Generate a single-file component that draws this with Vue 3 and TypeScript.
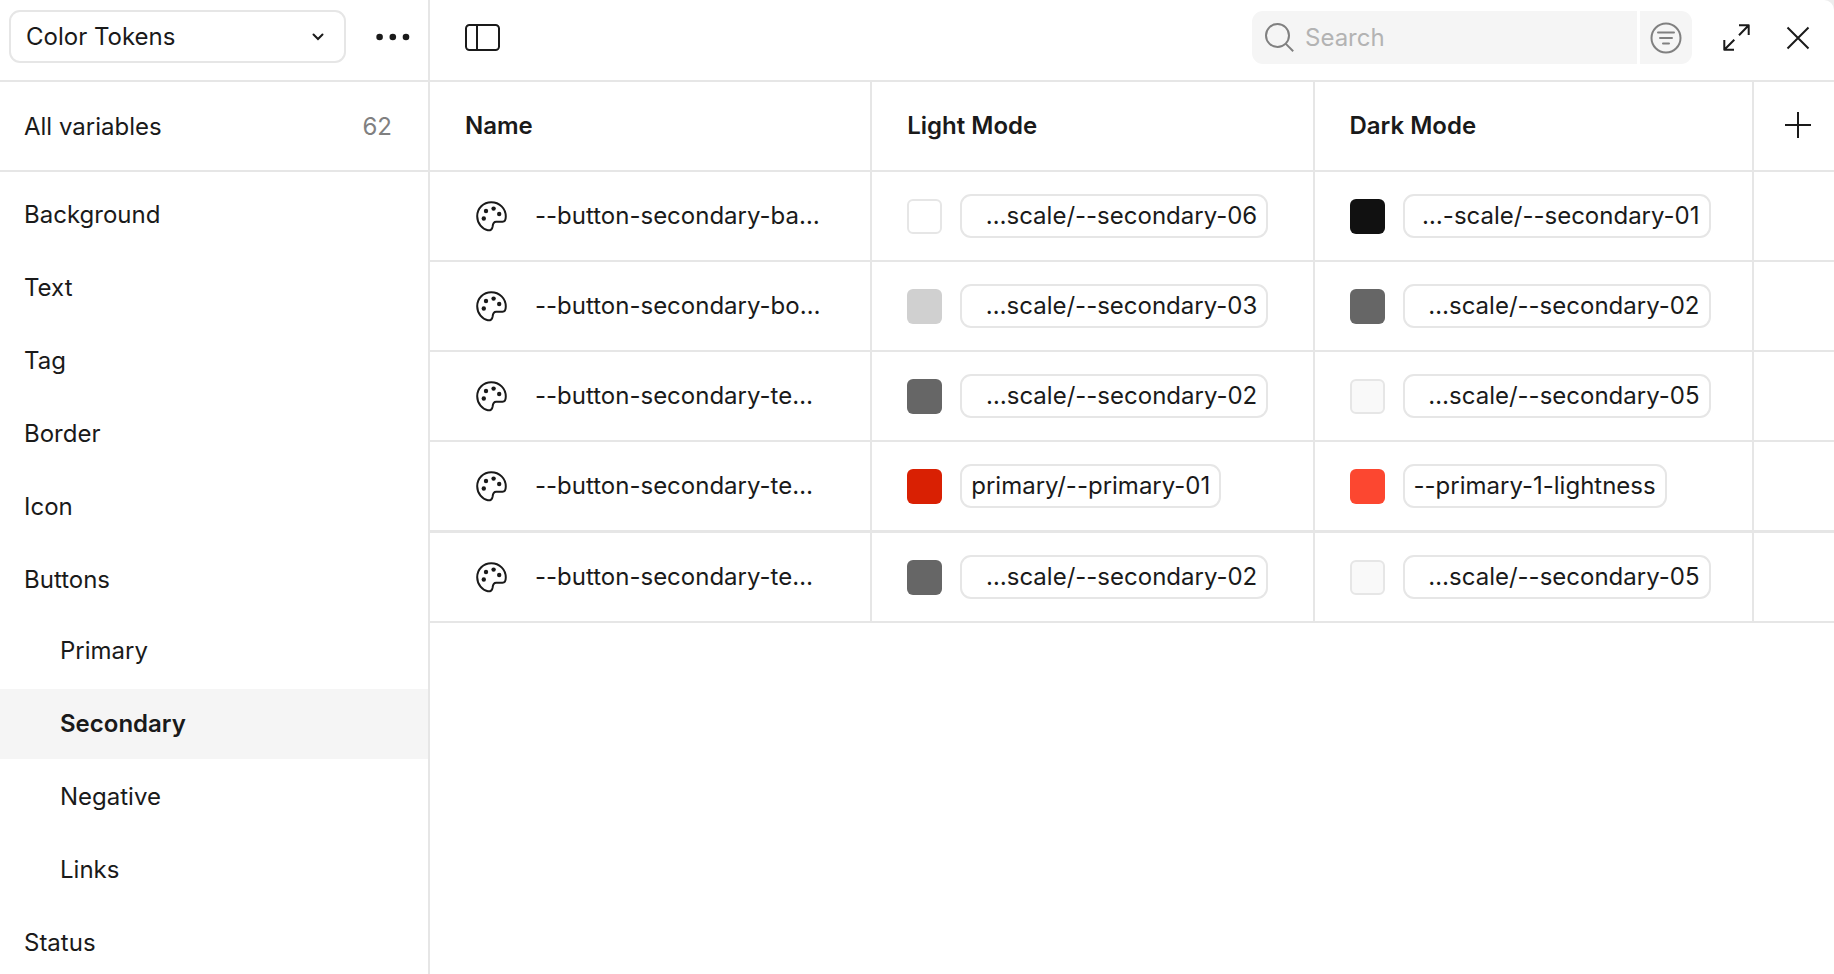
<script setup lang="ts">
import { ref } from 'vue'

interface TokenValue {
  color: string
  label: string
  outlined?: boolean
  clipped?: boolean
}

interface Token {
  name: string
  light: TokenValue
  dark: TokenValue
}

interface Group {
  name: string
  children?: string[]
}

const collection = ref('Color Tokens')
const query = ref('')
const selected = ref('Secondary')

const groups: Group[] = [
  { name: 'Background' },
  { name: 'Text' },
  { name: 'Tag' },
  { name: 'Border' },
  { name: 'Icon' },
  { name: 'Buttons', children: ['Primary', 'Secondary', 'Negative', 'Links'] },
  { name: 'Status' },
]

const black: TokenValue = { color: '#111111', label: '…-scale/--secondary-01', clipped: true }
const grey: TokenValue = { color: '#666666', label: '…scale/--secondary-02', clipped: true }
const silver: TokenValue = { color: '#d0d0d0', label: '…scale/--secondary-03', clipped: true }
const mist: TokenValue = { color: '#f9f9f9', label: '…scale/--secondary-05', clipped: true, outlined: true }
const white: TokenValue = { color: '#ffffff', label: '…scale/--secondary-06', clipped: true, outlined: true }

const tokens: Token[] = [
  { name: '--button-secondary-ba…', light: white, dark: black },
  { name: '--button-secondary-bo…', light: silver, dark: grey },
  { name: '--button-secondary-te…', light: grey, dark: mist },
  {
    name: '--button-secondary-te…',
    light: { color: '#d92003', label: 'primary/--primary-01' },
    dark: { color: '#fc4730', label: '--primary-1-lightness' },
  },
  { name: '--button-secondary-te…', light: grey, dark: mist },
]
</script>

<template>
  <div class="panel">
    <aside class="sidebar">
      <div class="bar sidebar-bar">
        <div class="collection">
          <select v-model="collection" aria-label="Collection">
            <option>Color Tokens</option>
          </select>
          <svg class="chevron" width="12" height="8" viewBox="0 0 12 8" aria-hidden="true">
            <path d="M1.500 1.500 6 6l4.500-4.500" />
          </svg>
        </div>
        <button class="icon-button" type="button" aria-label="More options">
          <svg width="34" height="8" viewBox="0 0 34 8">
            <g class="solid">
              <circle cx="3.600" cy="4" r="3.300" />
              <circle cx="16.800" cy="4" r="3.300" />
              <circle cx="30" cy="4" r="3.300" />
            </g>
          </svg>
        </button>
      </div>

      <button class="all" type="button">
        <span>All variables</span>
        <span class="count">62</span>
      </button>

      <ul class="groups">
        <li v-for="group in groups" :key="group.name">
          <button
            class="item"
            :class="{ active: selected === group.name }"
            type="button"
            @click="selected = group.name"
          >
            {{ group.name }}
          </button>
          <ul v-if="group.children" class="children">
            <li v-for="child in group.children" :key="child">
              <button
                class="item child"
                :class="{ active: selected === child }"
                type="button"
                @click="selected = child"
              >
                {{ child }}
              </button>
            </li>
          </ul>
        </li>
      </ul>
    </aside>

    <main class="content">
      <header class="bar toolbar">
        <button class="icon-button" type="button" aria-label="Toggle sidebar">
          <svg width="35" height="27" viewBox="0 0 35 27">
            <rect x="1" y="1" width="33" height="25" rx="3.500" />
            <path d="M12 1v25" />
          </svg>
        </button>

        <div class="tools">
          <div class="search">
            <label class="search-field">
              <svg width="29" height="29" viewBox="0 0 29 29" aria-hidden="true">
                <circle cx="12.500" cy="12.500" r="11.500" />
                <path d="m20.600 20.600 7.600 7.600" />
              </svg>
              <input v-model="query" type="text" placeholder="Search" aria-label="Search" />
            </label>
            <button class="filter" type="button" aria-label="Filter">
              <svg width="32" height="32" viewBox="0 0 32 32">
                <circle cx="16" cy="16" r="14.500" />
                <path d="M8 10.500h16M10 16h12M13 21.500h6" />
              </svg>
            </button>
          </div>
          <button class="icon-button" type="button" aria-label="Expand">
            <svg width="27" height="27" viewBox="0 0 27 27">
              <path d="M16 1.300h9.700V11M25.700 1.300l-9.700 10M1.300 16v9.700H11M1.300 25.700l10-10" />
            </svg>
          </button>
          <button class="icon-button close" type="button" aria-label="Close">
            <svg width="24" height="24" viewBox="0 0 24 24">
              <path d="m1.500 1.500 21 21m0-21-21 21" />
            </svg>
          </button>
        </div>
      </header>

      <table class="tokens">
        <colgroup>
          <col class="wide-column" />
          <col class="wide-column" />
          <col />
          <col class="add-column" />
        </colgroup>
        <thead>
          <tr>
            <th scope="col">Name</th>
            <th scope="col">Light Mode</th>
            <th scope="col">Dark Mode</th>
            <th class="add" scope="col">
              <button class="icon-button" type="button" aria-label="Add mode">
                <svg width="26" height="26" viewBox="0 0 26 26">
                  <path d="M13 0v26M0 13h26" />
                </svg>
              </button>
            </th>
          </tr>
        </thead>
        <tbody>
          <tr v-for="(token, index) in tokens" :key="index">
            <td>
              <div class="name">
                <svg width="31" height="31" viewBox="0 0 31 31" aria-hidden="true">
                  <path
                    d="M15.300 1.200C7.300 1.200 1.200 7.300 1.200 15.200c0 7.300 5.300 13 10.600 14 2.700.4 4.500-.9 4.800-3.500.3-3.400.9-5 3.600-5h6.300c2 0 3.300-1.700 3.300-5.200 0-8-6.300-14.300-14.500-14.300z"
                  />
                  <g class="solid">
                    <circle cx="7.800" cy="17.500" r="2.200" />
                    <circle cx="10" cy="10" r="2.200" />
                    <circle cx="17.600" cy="7.600" r="2.200" />
                    <circle cx="23.200" cy="13" r="2.200" />
                  </g>
                </svg>
                <span>{{ token.name }}</span>
              </div>
            </td>
            <td v-for="(value, mode) in [token.light, token.dark]" :key="mode">
              <div class="value">
                <span
                  class="swatch"
                  :class="{ outlined: value.outlined }"
                  :style="{ backgroundColor: value.color }"
                ></span>
                <button class="chip" :class="{ clipped: value.clipped }" type="button">
                  {{ value.label }}
                </button>
              </div>
            </td>
            <td></td>
          </tr>
        </tbody>
      </table>
    </main>
  </div>
</template>

<style>
body {
  margin: 0;
  background: #ededed;
}
</style>

<style scoped>
.panel {
  --line: #e6e6e6;
  --ink: #1a1a1a;
  --muted: #808080;
  --fill: #f5f5f5;
  display: grid;
  grid-template-columns: 430px minmax(0, 1fr);
  height: 100vh;
  overflow: hidden;
  box-sizing: border-box;
  border-top-right-radius: 10px;
  background: #ffffff;
  color: var(--ink);
  font-family: Inter, 'Liberation Sans', sans-serif;
  font-size: 24px;
  line-height: 32px;
}

.panel * {
  box-sizing: border-box;
}

button,
input,
select {
  margin: 0;
  padding: 0;
  border: 0;
  background: none;
  color: inherit;
  font: inherit;
}

svg {
  display: block;
  flex: none;
  fill: none;
  stroke: currentColor;
  stroke-width: 2;
}

.solid {
  fill: currentColor;
  stroke: none;
}

.sidebar {
  border-right: 2px solid var(--line);
}

.bar {
  display: flex;
  align-items: center;
  height: 82px;
  border-bottom: 2px solid var(--line);
}

.sidebar-bar {
  justify-content: space-between;
  padding: 0 18px 7px 9px;
}

.collection {
  display: grid;
  align-items: center;
  width: 337px;
}

.collection select {
  grid-area: 1 / 1;
  height: 53px;
  padding: 1px 48px 0 15px;
  border: 2px solid var(--line);
  border-radius: 11px;
  appearance: none;
}

.chevron {
  grid-area: 1 / 1;
  justify-self: end;
  margin-right: 22px;
  stroke-linecap: round;
  pointer-events: none;
}

.icon-button {
  display: grid;
  place-items: center;
}

.icon-button svg {
  stroke-linejoin: round;
}

.all {
  display: flex;
  align-items: center;
  justify-content: space-between;
  width: 100%;
  height: 90px;
  padding: 2px 36px 0 24px;
  border-bottom: 2px solid var(--line);
}

.count {
  color: var(--muted);
}

ul {
  display: flex;
  flex-direction: column;
  margin: 0;
  padding: 0;
  list-style: none;
}

.groups {
  gap: 3px;
  padding-top: 8px;
}

.children {
  gap: 3px;
  padding-top: 1px;
}

.item {
  display: block;
  width: 100%;
  height: 70px;
  padding: 0 24px;
  text-align: left;
}

.child {
  padding-left: 60px;
}

.active {
  background: var(--fill);
  font-weight: 600;
}

.toolbar {
  justify-content: space-between;
  padding: 0 24px 5px 35px;
}

.tools {
  display: flex;
  align-items: center;
}

.search {
  display: flex;
  gap: 3px;
  margin-right: 31px;
  color: var(--muted);
}

.search-field,
.filter {
  display: flex;
  align-items: center;
  height: 53px;
  background: var(--fill);
}

.search-field {
  gap: 11px;
  width: 385px;
  padding-left: 13px;
  border-radius: 11px 0 0 11px;
}

.search-field input {
  flex: 1;
  min-width: 0;
  outline: 0;
  color: var(--ink);
}

.search-field input::placeholder {
  color: #b3b3b3;
  opacity: 1;
}

.filter {
  justify-content: center;
  width: 52px;
  border-radius: 0 11px 11px 0;
}

.filter path {
  stroke-linecap: round;
}

.close {
  margin-left: 36px;
}

.tokens {
  width: 100%;
  border-spacing: 0;
  table-layout: fixed;
}

.wide-column {
  width: 31.5%;
}

.add-column {
  width: 80px;
}

th,
td {
  height: 90px;
  padding: 0 0 0 35px;
  border-right: 2px solid var(--line);
  border-bottom: 2px solid var(--line);
  font-weight: 400;
  text-align: left;
  vertical-align: middle;
}

th {
  font-weight: 600;
}

th:last-child,
td:last-child {
  border-right: 0;
}

.add {
  padding: 0 0 2px 31px;
}

tbody tr:nth-child(4) td {
  height: 91px;
  border-bottom-width: 3px;
}

.name,
.value {
  display: flex;
  align-items: center;
}

.name {
  gap: 28px;
  padding-left: 11px;
  white-space: nowrap;
}

.value {
  gap: 18px;
}

.swatch {
  flex: none;
  width: 35px;
  height: 35px;
  border-radius: 6px;
}

.outlined {
  border: 2px solid var(--line);
}

.chip {
  height: 44px;
  padding: 0 9px;
  border: 2px solid var(--line);
  border-radius: 11px;
  white-space: nowrap;
}

.clipped {
  width: 308px;
  text-align: right;
}
</style>
